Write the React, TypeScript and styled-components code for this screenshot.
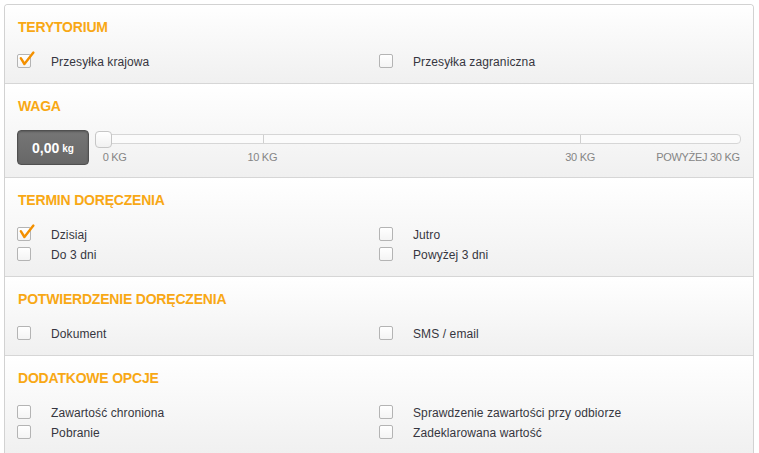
import React from "react";
import styled, { createGlobalStyle } from "styled-components";

const GlobalStyle = createGlobalStyle`
  html, body { margin: 0; padding: 0; background: #ffffff; }
  body { font-family: "Liberation Sans", Arial, sans-serif; }
  * { box-sizing: border-box; }
`;

const Page = styled.div`
  padding: 4px 5px 0 4px;
`;

const Panel = styled.div`
  width: 750px;
  border: 1px solid #d2d2d2;
  border-bottom: none;
  border-radius: 4px 4px 0 0;
  overflow: hidden;
`;

const Section = styled.section`
  padding: 14px 12px 12px;
  background: linear-gradient(#ffffff 0%, #f9f9f9 40%, #f0f0f0 100%);
  & + & {
    border-top: 1px solid #d6d6d6;
  }
`;

const Heading = styled.h2`
  margin: 0 0 16px 1px;
  font-size: 14px;
  line-height: 16px;
  font-weight: bold;
  color: #f8a815;
  letter-spacing: -0.2px;
`;

const OptionGrid = styled.div`
  display: grid;
  grid-template-columns: 1fr 1fr;
  grid-auto-rows: 20px;
`;

const Option = styled.label`
  display: flex;
  align-items: center;
  gap: 20px;
  height: 20px;
`;

const Box = styled.span`
  position: relative;
  width: 14px;
  height: 14px;
  flex: none;
  border: 1px solid #b4b4b4;
  border-radius: 2px;
  background: linear-gradient(#ffffff, #f4f4f4);
`;

const Check = styled.svg`
  position: absolute;
  left: 1px;
  top: -3px;
  width: 16px;
  height: 16px;
  overflow: visible;
`;

const LabelText = styled.span`
  font-size: 12px;
  line-height: 14px;
  padding-top: 1px;
  color: #363640;
  letter-spacing: 0.1px;
`;

const WeightRow = styled.div`
  display: flex;
  align-items: flex-start;
  gap: 6px;
`;

const WeightBox = styled.div`
  width: 72px;
  height: 35px;
  flex: none;
  display: flex;
  align-items: center;
  justify-content: center;
  gap: 3px;
  border: 1px solid #505050;
  border-radius: 4px;
  background: linear-gradient(#767676, #676767);
  box-shadow: inset 0 1px 2px rgba(0, 0, 0, 0.25);
  color: #ffffff;
  font-weight: bold;
`;

const WeightValue = styled.span`
  font-size: 14px;
  line-height: 16px;
`;

const WeightUnit = styled.span`
  font-size: 10px;
  line-height: 16px;
  padding-top: 2px;
`;

const Slider = styled.div`
  flex: 1;
  padding-top: 4px;
`;

const Track = styled.div`
  position: relative;
  height: 10px;
  border: 1px solid #d6d6d6;
  border-radius: 0 4px 4px 0;
  background: #fbfbfb;
`;

const Tick = styled.span`
  position: absolute;
  top: 0;
  bottom: 0;
  width: 1px;
  background: #cfcfcf;
`;

const Handle = styled.span`
  position: absolute;
  left: -1px;
  top: -4px;
  width: 17px;
  height: 17px;
  border: 1px solid #c6c6c6;
  border-radius: 4px;
  background: linear-gradient(#ffffff, #f1f1f1);
`;

const Scale = styled.div`
  position: relative;
  height: 13px;
  margin-top: 7px;
  font-size: 11px;
  line-height: 13px;
  color: #858585;
`;

const ScaleLabel = styled.span<{ $align: "left" | "center" | "right" }>`
  position: absolute;
  top: 0;
  white-space: nowrap;
  letter-spacing: -0.3px;
  transform: ${(p) =>
    p.$align === "center" ? "translateX(-50%)" : p.$align === "right" ? "translateX(-100%)" : "none"};
`;

type Opt = { label: string; checked?: boolean };

const CheckMark = () => (
  <Check viewBox="0 0 16 16">
    <path
      d="M1.8 6.2 L5.4 12 L14.4 0.6"
      fill="none"
      stroke="#f39000"
      strokeWidth="2.4"
      strokeLinecap="round"
      strokeLinejoin="round"
    />
  </Check>
);

const Options = ({ items }: { items: Opt[] }) => (
  <OptionGrid>
    {items.map((o) => (
      <Option key={o.label}>
        <Box>{o.checked && <CheckMark />}</Box>
        <LabelText>{o.label}</LabelText>
      </Option>
    ))}
  </OptionGrid>
);

const scale = [
  { text: "0 KG", pos: 1.2, align: "left" as const },
  { text: "10 KG", pos: 25.9, align: "center" as const },
  { text: "30 KG", pos: 75.1, align: "center" as const },
  { text: "POWYŻEJ 30 KG", pos: 99.8, align: "right" as const },
];

export default function App() {
  return (
    <>
      <GlobalStyle />
      <Page>
        <Panel>
          <Section>
            <Heading>TERYTORIUM</Heading>
            <Options
              items={[
                { label: "Przesyłka krajowa", checked: true },
                { label: "Przesyłka zagraniczna" },
              ]}
            />
          </Section>
          <Section>
            <Heading>WAGA</Heading>
            <WeightRow>
              <WeightBox>
                <WeightValue>0,00</WeightValue>
                <WeightUnit>kg</WeightUnit>
              </WeightBox>
              <Slider>
                <Track>
                  <Tick style={{ left: "25.9%" }} />
                  <Tick style={{ left: "75.1%" }} />
                  <Handle />
                </Track>
                <Scale>
                  {scale.map((s) => (
                    <ScaleLabel key={s.text} $align={s.align} style={{ left: `${s.pos}%` }}>
                      {s.text}
                    </ScaleLabel>
                  ))}
                </Scale>
              </Slider>
            </WeightRow>
          </Section>
          <Section>
            <Heading>TERMIN DORĘCZENIA</Heading>
            <Options
              items={[
                { label: "Dzisiaj", checked: true },
                { label: "Jutro" },
                { label: "Do 3 dni" },
                { label: "Powyżej 3 dni" },
              ]}
            />
          </Section>
          <Section>
            <Heading>POTWIERDZENIE DORĘCZENIA</Heading>
            <Options items={[{ label: "Dokument" }, { label: "SMS / email" }]} />
          </Section>
          <Section>
            <Heading>DODATKOWE OPCJE</Heading>
            <Options
              items={[
                { label: "Zawartość chroniona" },
                { label: "Sprawdzenie zawartości przy odbiorze" },
                { label: "Pobranie" },
                { label: "Zadeklarowana wartość" },
              ]}
            />
          </Section>
        </Panel>
      </Page>
    </>
  );
}
